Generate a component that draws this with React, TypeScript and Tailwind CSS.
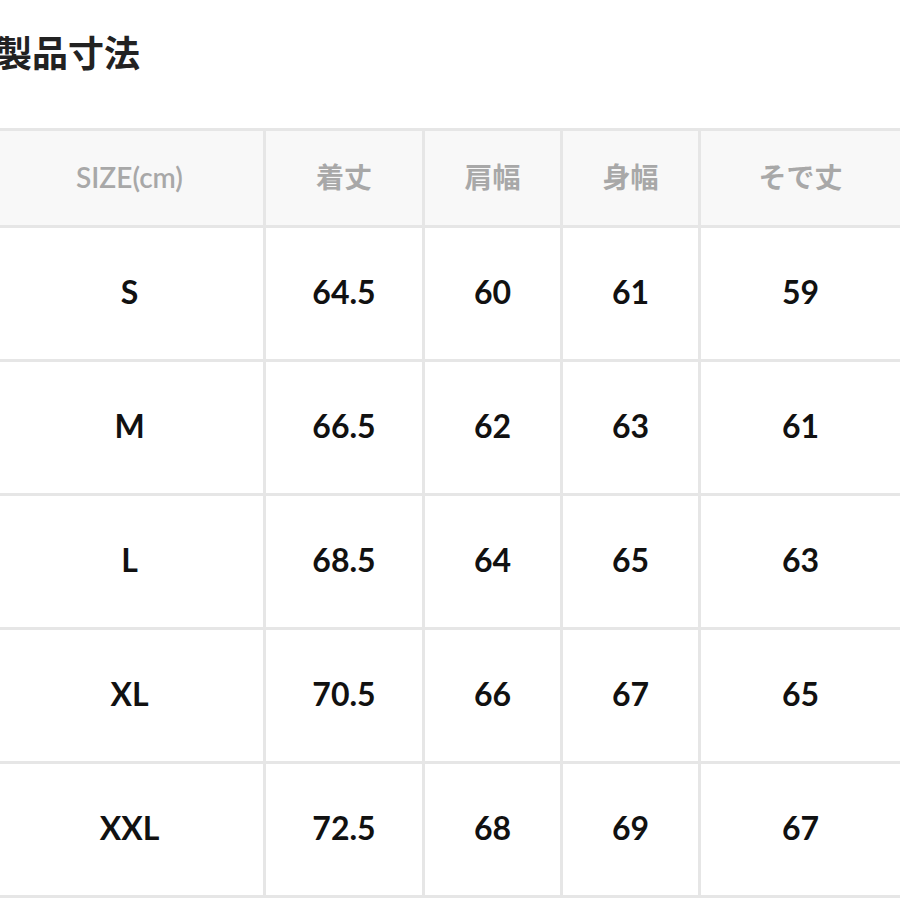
const headers = ["SIZE(cm)", "着丈", "肩幅", "身幅", "そで丈"];

const rows = [
  ["S", "64.5", "60", "61", "59"],
  ["M", "66.5", "62", "63", "61"],
  ["L", "68.5", "64", "65", "63"],
  ["XL", "70.5", "66", "67", "65"],
  ["XXL", "72.5", "68", "69", "67"],
];

export default function App() {
  return (
    <div className="w-[900px] h-[900px] overflow-hidden bg-white font-['Lato','Noto_Sans_CJK_JP',sans-serif]">
      <div className="ml-[-4px] w-[904px]">
        <h1 className="h-[128px] pt-[33px] text-[36px] leading-none font-bold text-[#222] font-['Noto_Sans_CJK_JP',sans-serif]">
          製品寸法
        </h1>
        <div className="grid grid-cols-[267px_156px_135px_135px_1fr] gap-[3px] pt-[3px] pb-[3px] bg-[#e6e6e6]">
          {headers.map((h) => (
            <div
              key={h}
              className="h-[94px] pb-[2px] flex items-center justify-center bg-[#f8f8f8] text-[28px] font-semibold text-[#a8a8a8]"
            >
              {h}
            </div>
          ))}
          {rows.map((r) =>
            r.map((v, i) => (
              <div
                key={r[0] + i}
                className="h-[131px] pb-[4px] flex items-center justify-center bg-white text-[32px] font-bold text-[#111]"
              >
                {v}
              </div>
            ))
          )}
        </div>
      </div>
    </div>
  );
}
